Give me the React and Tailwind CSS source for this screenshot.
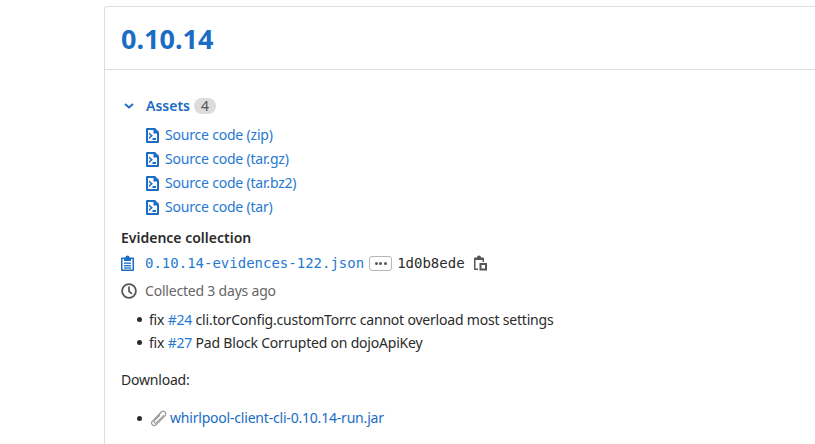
import React from "react";

const sans = "[font-family:'Noto_Sans',sans-serif]";
const mono = "font-['DejaVu_Sans_Mono',monospace]";

const assets = ["Source code (zip)", "Source code (tar.gz)", "Source code (tar.bz2)", "Source code (tar)"];

const FileCodeIcon = () => (
  <svg width="13" height="15" viewBox="0 0 13 15" fill="#1a6cc4" className="shrink-0">
    <path fillRule="evenodd" d="M1 0h8l4 4v10a1 1 0 0 1-1 1H1a1 1 0 0 1-1-1V1a1 1 0 0 1 1-1zm1 2v11h9V5.500H7.500V2H2z" />
    <path d="M3 4.500 7 7.800 3 11V9l1.800-1.200L3 6.500z" />
    <rect x="6.500" y="10" width="3.500" height="2" />
  </svg>
);

const ClippyIcon = () => (
  <svg width="13" height="16" viewBox="0 0 13 16" fill="#1a6cc4" className="shrink-0">
    <path fillRule="evenodd" d="M1 2.500h3.500a2 2 0 0 1 4 0H12a1 1 0 0 1 1 1V15a1 1 0 0 1-1 1H1a1 1 0 0 1-1-1V3.500a1 1 0 0 1 1-1zM1.500 4v10.500h10V4H10v2H3V4H1.500z" />
    <rect x="3" y="7.500" width="7" height="1.300" />
    <rect x="3" y="10" width="7" height="1.300" />
    <rect x="3" y="12.300" width="7" height="1.300" />
  </svg>
);

const ClockIcon = () => (
  <svg width="16" height="16" viewBox="0 0 16 16" fill="none" stroke="#555" className="shrink-0">
    <circle cx="8" cy="8" r="6.900" strokeWidth="1.800" />
    <path d="M8 3.500V8.300L11 10.800" strokeWidth="1.700" />
  </svg>
);

const CopyIcon = () => (
  <svg width="13" height="16" viewBox="0 0 13 16" fill="#555" className="shrink-0">
    <path fillRule="evenodd" d="M1 2.500h2a2 2 0 0 1 4 0h2a1 1 0 0 1 1 1V7H8.500V5h-7v8.500H4V15H1a1 1 0 0 1-1-1V3.500a1 1 0 0 1 1-1z" />
    <path fillRule="evenodd" d="M5.500 8H13v7.500H5.500V8zM7.500 10v3.500H11V10H7.500z" />
  </svg>
);

const PaperclipIcon = () => (
  <svg width="17" height="17" viewBox="0 0 17 17" fill="none" stroke="#999" strokeWidth="1.200" className="shrink-0">
    <path d="M11.500 2 2.200 11.300a2.600 2.600 0 0 0 3.600 3.700L15 5.800A2.600 2.600 0 0 0 11.300 2L3.700 9.800" />
    <path d="M10 5 4.500 10.700a1.400 1.400 0 0 0 2 2L14 5.200" />
  </svg>
);

const Dot = () => <i className="shrink-0 ml-4 mr-[7px] w-[5px] h-[5px] rounded-full bg-[#2b2b2b]" />;

export default function App() {
  return (
    <div className={`${sans} w-[815px] h-[444px] overflow-hidden bg-white text-[#2b2b2b] text-sm tracking-[-0.2px]`}>
      <div className="w-[800px] h-[500px] mt-[6px] ml-[104px] border-l border-t border-[#dedede] rounded-tl-[3px]">
        <div className="h-[63px] pl-4 flex items-center border-b border-[#dedede]">
          <h1 className="text-[27px] font-bold tracking-normal text-[#1a6cc4] leading-none">0.10.14</h1>
        </div>

        <div className="pl-4 pt-[26px]">
          <div className="flex items-center h-[20px]">
            <svg width="10" height="6" viewBox="0 0 10 6" fill="none" stroke="#1a6cc4" strokeWidth="1.800" className="ml-[3px] mr-[12px]">
              <path d="M1 1l4 3.500L9 1" />
            </svg>
            <span className="font-semibold tracking-normal text-[#1a6cc4]">Assets</span>
            <span className="ml-[4px] h-[16px] w-[22px] text-center rounded-full bg-[#dcdcdc] text-sm leading-[16px] text-[#555]">4</span>
          </div>

          <ul className="pt-[7px] pl-[25px]">
            {assets.map((a) => (
              <li key={a} className="h-[24px] flex items-center gap-[6px]">
                <FileCodeIcon />
                <a className="text-[#2679d2]">{a}</a>
              </li>
            ))}
          </ul>

          <h3 className="mt-[9px] font-semibold tracking-normal leading-[20px]">Evidence collection</h3>

          <div className="mt-[3px] h-[24px] flex items-center">
            <ClippyIcon />
            <a className={`ml-[11px] ${mono} tracking-normal text-[#2679d2]`}>0.10.14-evidences-122.json</a>
            <span className="ml-[5px] w-[23px] h-[15px] border border-[#b5b5b5] rounded-[3px] flex items-center justify-center gap-[1.500px]">
              <i className="w-[3px] h-[3px] rounded-full bg-[#555]" />
              <i className="w-[3px] h-[3px] rounded-full bg-[#555]" />
              <i className="w-[3px] h-[3px] rounded-full bg-[#555]" />
            </span>
            <span className={`ml-[5px] ${mono} tracking-normal`}>1d0b8ede</span>
            <span className="ml-[9px]"><CopyIcon /></span>
          </div>

          <div className="mt-[4px] h-[24px] flex items-center gap-2">
            <ClockIcon />
            <span className="text-[#666]">Collected 3 days ago</span>
          </div>

          <ul className="mt-[5px]">
            <li className="flex items-center h-[23px]">
              <Dot />
              <span>fix <a className="text-[#2679d2]">#24</a> cli.torConfig.customTorrc cannot overload most settings</span>
            </li>
            <li className="flex items-center h-[23px]">
              <Dot />
              <span>fix <a className="text-[#2679d2]">#27</a> Pad Block Corrupted on dojoApiKey</span>
            </li>
          </ul>

          <p className="mt-[15px] leading-[21px]">Download:</p>

          <ul className="mt-[16px]">
            <li className="flex items-center h-[24px]">
              <Dot />
              <span className="ml-px mr-[3px]"><PaperclipIcon /></span>
              <a className="text-[#1a6cc4]">whirlpool-client-cli-0.10.14-run.jar</a>
            </li>
          </ul>
        </div>
      </div>
    </div>
  );
}
